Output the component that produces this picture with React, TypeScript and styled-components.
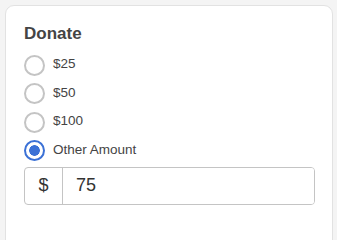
import React, { useState } from 'react';
import styled, { createGlobalStyle } from 'styled-components';

const GlobalStyle = createGlobalStyle`
  html, body {
    margin: 0;
    padding: 0;
    height: 100%;
    overflow: hidden;
    background: #f4f4f4;
    font-family: Arial, "Liberation Sans", sans-serif;
  }
`;

const amounts = ['$25', '$50', '$100', 'Other Amount'];

export default function App() {
  const [selected, setSelected] = useState(3);
  const [value, setValue] = useState('75');

  return (
    <>
      <GlobalStyle />
      <Page>
        <Card>
          <Title>Donate</Title>
          <Options>
            {amounts.map((label, i) => (
              <Option key={label} onClick={() => setSelected(i)}>
                <Radio $checked={selected === i} />
                <Label>{label}</Label>
              </Option>
            ))}
          </Options>
          <AmountField>
            <Prefix>$</Prefix>
            <AmountInput value={value} onChange={(e) => setValue(e.target.value)} />
          </AmountField>
        </Card>
      </Page>
    </>
  );
}

const Page = styled.div`
  padding: 5px 4px 0 5px;
  height: 100vh;
  box-sizing: border-box;
  overflow: hidden;
`;

const Card = styled.div`
  background: #fff;
  border: 1px solid #e2e2e2;
  border-radius: 9px;
  padding: 18px 17px 80px 18px;
`;

const Title = styled.h2`
  margin: 0 0 12px;
  font-size: 17px;
  line-height: 19px;
  font-weight: bold;
  color: #444;
`;

const Options = styled.div`
  display: flex;
  flex-direction: column;
  gap: 8.5px;
`;

const Option = styled.label`
  display: flex;
  align-items: center;
  gap: 8px;
  height: 20px;
  cursor: pointer;
`;

interface RadioProps {
  $checked: boolean;
}

const Radio = styled.span<RadioProps>`
  width: 21px;
  height: 21px;
  box-sizing: border-box;
  border-radius: 50%;
  border: ${(p) => (p.$checked ? '2.5px solid #3b71d6' : '2px solid #c4c4c4')};
  background: ${(p) =>
    p.$checked ? 'radial-gradient(circle, #3b71d6 0 5px, #fff 5.6px)' : '#fff'};
  flex-shrink: 0;
`;

const Label = styled.span`
  font-size: 13.5px;
  color: #444;
  margin-top: -3px;
`;

const AmountField = styled.div`
  display: flex;
  margin-top: 6px;
  height: 38px;
  border: 1px solid #c4c4c4;
  border-radius: 4px;
  box-sizing: border-box;
  overflow: hidden;
`;

const Prefix = styled.span`
  width: 37px;
  display: flex;
  align-items: center;
  justify-content: center;
  border-right: 1px solid #c4c4c4;
  font-size: 18px;
  color: #333;
`;

const AmountInput = styled.input`
  flex: 1;
  min-width: 0;
  border: none;
  outline: none;
  padding: 0 0 0 13px;
  font-family: inherit;
  font-size: 18px;
  color: #333;
  background: #fff;
`;
